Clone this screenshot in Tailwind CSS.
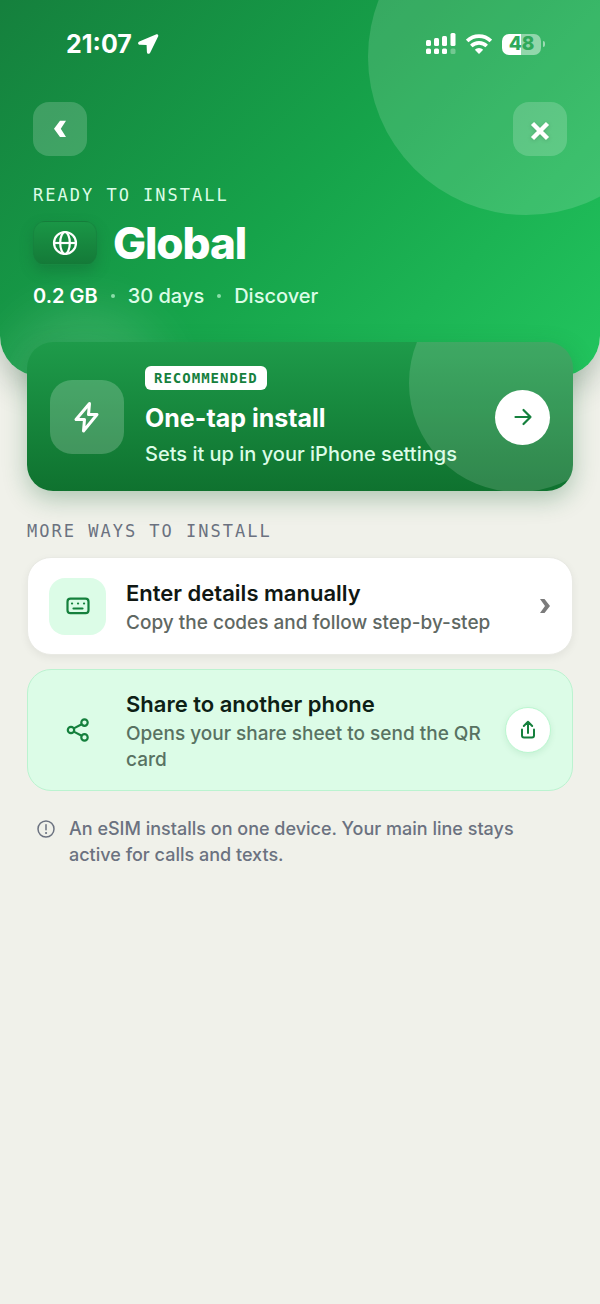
<!DOCTYPE html>
<html lang="en">
<head>
    <meta charset="UTF-8">
    <meta name="viewport" content="width=device-width, initial-scale=1.0">
    <title>Install eSIM</title>
    <script src="https://cdn.jsdelivr.net/npm/@tailwindcss/browser@4"></script>
</head>
<body class="min-h-screen bg-[#f0f1ea] font-['Inter',sans-serif]">
    <!-- Header -->
    <header class="relative overflow-hidden rounded-b-[40px] bg-[linear-gradient(135deg,#15803d,#16a34a_50%,#22c55e)] px-[33px] pt-6 pb-[66px] text-white shadow-[0_10px_32px_rgba(21,60,35,0.3)]">
        <div class="absolute -top-[101px] -right-[84px] size-[316px] rounded-full bg-white/14"></div>
        <div class="absolute -bottom-[100px] left-0 size-[170px] rounded-full bg-white/12 blur-xl"></div>

        <div class="relative">
            <!-- Status bar -->
            <div class="flex h-10 items-center justify-between pr-[22px] pl-[33px]">
                <div class="flex items-center gap-1.5">
                    <span class="text-[25px] leading-8 font-bold">21:07</span>
                    <svg class="h-5 w-[21px]" viewBox="0 0 21 20" fill="currentColor"><path d="M17.900.4 1.300 7.500c-1.900.9-1.500 3.200.6 3.200l6.700.2.3 7c.1 2.200 2.500 2.600 3.400.7L20.100 2.500C20.800.9 19.500-.3 17.900.4z"/></svg>
                </div>
                <div class="flex items-center gap-2.5">
                    <svg class="h-[22px] w-[31px]" viewBox="0 0 31 22" fill="currentColor">
                        <rect x="1" y="7" width="5" height="6" rx="1.500"/>
                        <rect x="9" y="5" width="5" height="8" rx="1.500"/>
                        <rect x="17" y="3" width="5" height="10" rx="1.500"/>
                        <rect x="25.500" y="0" width="5" height="13" rx="1.500"/>
                        <rect x="1" y="15.500" width="5" height="5.500" rx="1.500"/>
                        <rect x="9" y="15.500" width="5" height="5.500" rx="1.500"/>
                        <rect x="17" y="15.500" width="5" height="5.500" rx="1.500"/>
                        <rect x="25.500" y="15.500" width="5" height="5.500" rx="1.500" opacity=".3"/>
                    </svg>
                    <svg class="h-5 w-[26px]" viewBox="0 0 26 20" fill="none" stroke="currentColor" stroke-width="3.600">
                        <path d="M1.200 6.900a17 17 0 0 1 23.600 0"/>
                        <path d="M5.300 12a11 11 0 0 1 15.400 0"/>
                        <path d="M13 20 8.800 15.800a5.800 5.800 0 0 1 8.400 0z" fill="currentColor" stroke="none"/>
                    </svg>
                    <div class="flex items-center gap-0.5">
                        <div class="flex h-[21px] w-[39px] items-center justify-center rounded-[7px] bg-linear-to-r from-white from-48% to-white/45 to-48% text-[19px] font-extrabold text-[#2fa95a]">48</div>
                        <div class="h-1.5 w-0.5 rounded-r-full bg-white/50"></div>
                    </div>
                </div>
            </div>

            <!-- Navigation -->
            <div class="mt-[38px] flex justify-between">
                <button type="button" aria-label="Back" class="flex size-[54px] items-center justify-center rounded-2xl bg-white/18">
                    <svg class="size-5" viewBox="0 0 20 20" fill="currentColor"><path d="M10 1.800h6L10.800 9.800l5.200 8.200h-6L4 9.800z"/></svg>
                </button>
                <button type="button" aria-label="Close" class="flex size-[54px] items-center justify-center rounded-2xl bg-white/18">
                    <svg class="mt-1 size-5 drop-shadow-sm" viewBox="0 0 20 20" fill="none" stroke="currentColor" stroke-width="4.400"><path d="m2.500 2.500 15 15M17.500 2.500l-15 15"/></svg>
                </button>
            </div>

            <p class="mt-[27px] font-['DejaVu_Sans_Mono',monospace] text-[17px] leading-6 tracking-[2px] text-[#dcfce7]">READY TO INSTALL</p>
            <div class="mt-2.5 flex items-center gap-4">
                <div class="flex h-11 w-16 items-center justify-center rounded-xl border border-[#15803d]/60 bg-linear-to-b from-[#1a9646] to-[#147a38] shadow-[0_6px_14px_rgba(20,83,45,0.3)]">
                    <svg class="size-[26px]" viewBox="0 0 26 26" fill="none" stroke="currentColor" stroke-width="2.200"><circle cx="13" cy="13" r="11"/><path d="M2 13h22"/><ellipse cx="13" cy="13" rx="4.800" ry="11"/></svg>
                </div>
                <h1 class="text-[44px] leading-[52px] font-extrabold tracking-tight">Global</h1>
            </div>
            <p class="mt-[13px] flex items-center gap-[13px] text-xl leading-7 font-medium text-[#dcfce7]">
                <span class="font-semibold text-white">0.2 GB</span>
                <span class="size-1 rounded-full bg-[#bbf7d0]/70"></span>
                <span>30 days</span>
                <span class="size-1 rounded-full bg-[#bbf7d0]/70"></span>
                <span>Discover</span>
            </p>
        </div>
    </header>

    <main class="relative -mt-[34px] px-[27px]">
        <!-- Recommended option -->
        <button type="button" class="relative flex w-full items-center gap-[21px] overflow-hidden rounded-[26px] bg-linear-to-b from-[#1e9b4a] to-[#0f722f] pt-6 pr-[23px] pb-[23px] pl-[23px] text-left text-white shadow-[0_8px_24px_rgba(21,100,50,0.3)]">
            <span class="absolute -top-[68px] -right-[54px] size-[218px] rounded-full bg-white/14"></span>
            <span class="relative flex size-[74px] shrink-0 items-center justify-center rounded-[22px] bg-white/20">
                <svg class="h-8 w-7" viewBox="0 0 28 32" fill="none" stroke="currentColor" stroke-width="3" stroke-linejoin="round" stroke-linecap="round"><path d="M16.500 2.500 3 18.500h8.500L10.500 30l13.500-16.500h-8.500z"/></svg>
            </span>
            <span class="relative flex-1">
                <span class="block w-fit rounded-md bg-white px-[9px] font-['DejaVu_Sans_Mono',monospace] text-sm leading-6 font-bold tracking-[1px] text-[#15803d]">RECOMMENDED</span>
                <span class="mt-2.5 block text-[25px] leading-9 font-bold">One-tap install</span>
                <span class="mt-1 block text-xl leading-7 font-medium text-[#dcfce7]">Sets it up in your iPhone settings</span>
            </span>
            <span class="relative flex size-[55px] shrink-0 items-center justify-center rounded-full bg-white text-[#15803d]">
                <svg class="size-[22px]" viewBox="0 0 22 22" fill="none" stroke="currentColor" stroke-width="2.200" stroke-linejoin="round" stroke-linecap="round"><path d="M3.500 11h15M11.500 4l7 7-7 7"/></svg>
            </span>
        </button>

        <!-- Other options -->
        <h2 class="mt-7 font-['DejaVu_Sans_Mono',monospace] text-[17px] leading-6 tracking-[2px] text-[#6b7280]">MORE WAYS TO INSTALL</h2>

        <button type="button" class="mt-3.5 flex w-full items-center gap-5 rounded-3xl border border-[#e9eae4] bg-white py-[18px] pr-[21px] pl-[21px] text-left shadow-[0_3px_8px_rgba(0,0,0,0.06)]">
            <span class="flex size-[57px] shrink-0 items-center justify-center rounded-2xl bg-[#dcfce7] text-[#15803d]">
                <svg class="h-[18px] w-6" viewBox="0 0 24 18" fill="none" stroke="currentColor" stroke-width="2.200" stroke-linecap="round"><rect x="1.500" y="1.700" width="21" height="14.500" rx="3"/><path d="M6 6.500h.1M12 6.500h.1M18 6.500h.1M7.500 11.500h9"/></svg>
            </span>
            <span class="flex-1">
                <span class="block text-[22px] leading-[34px] font-semibold text-[#101713]">Enter details manually</span>
                <span class="block text-[19px] leading-[26px] font-medium text-[#5f6863]">Copy the codes and follow step-by-step</span>
            </span>
            <svg class="h-4 w-3 text-[#7b7b7b]" viewBox="0 0 12 16" fill="currentColor"><path d="M1 1h4.500L11 8l-5.500 7H1l5-7z"/></svg>
        </button>

        <button type="button" class="mt-3.5 flex w-full items-center gap-5 rounded-3xl border border-[#bbf3d0] bg-[#dcfce7] py-[17px] pr-[21px] pl-[21px] text-left">
            <span class="flex size-[57px] shrink-0 items-center justify-center text-[#15803d]">
                <svg class="size-6" viewBox="0 0 24 24" fill="none" stroke="currentColor" stroke-width="2.200"><circle cx="5" cy="12" r="3.200"/><circle cx="18.500" cy="4.600" r="3.200"/><circle cx="18.500" cy="19.400" r="3.200"/><path d="m7.800 10.400 7.900-4.200M7.800 13.600l7.900 4.200"/></svg>
            </span>
            <span class="flex-1">
                <span class="block text-[22px] leading-[34px] font-semibold text-[#0d2015]">Share to another phone</span>
                <span class="block text-[19px] leading-[26px] font-medium text-[#587262]">Opens your share sheet to send the QR card</span>
            </span>
            <span class="flex size-[46px] shrink-0 items-center justify-center rounded-full border border-[#bbf7d0] bg-white text-[#15803d] shadow-[0_2px_6px_rgba(21,128,61,0.1)]">
                <svg class="size-5" viewBox="0 0 20 20" fill="none" stroke="currentColor" stroke-width="2" stroke-linejoin="round" stroke-linecap="round"><path d="M10 13V1.800M5.800 6 10 1.800 14.200 6M4 9.500v6a2 2 0 0 0 2 2h8a2 2 0 0 0 2-2v-6"/></svg>
            </span>
        </button>

        <!-- Note -->
        <div class="mt-[25px] flex gap-3.5 px-2.5 text-[#6b7280]">
            <svg class="mt-1 size-[18px] shrink-0" viewBox="0 0 18 18" fill="none" stroke="currentColor" stroke-width="1.500" stroke-linecap="round"><circle cx="9" cy="9" r="8"/><path d="M9 4.800v5"/><path d="M9 12.900h.1" stroke-width="2"/></svg>
            <p class="text-lg leading-[26px] font-medium">An eSIM installs on one device. Your main line stays active for calls and texts.</p>
        </div>
    </main>
</body>
</html>
